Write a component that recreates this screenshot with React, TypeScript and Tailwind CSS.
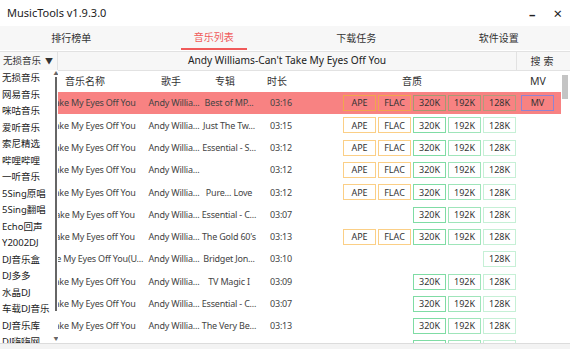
import React from "react";

type Row = {
  title: string;
  album: string;
  time: string;
  q: string[];
};

const sources = [
  "无损音乐", "网易音乐", "咪咕音乐", "爱听音乐", "索尼精选", "哔哩哔哩", "一听音乐",
  "5Sing原唱", "5Sing翻唱", "Echo回声", "Y2002DJ", "DJ音乐盒", "DJ多多", "水晶DJ",
  "车载DJ音乐", "DJ音乐库", "DJ嗨嗨网",
];

const all = ["APE", "FLAC", "320K", "192K", "128K"];
const mp3 = ["320K", "192K", "128K"];

const rows: Row[] = [
  { title: "Take My Eyes Off You", album: "Best of MP...", time: "03:16", q: all },
  { title: "Take My Eyes Off You", album: "Just The Tw...", time: "03:15", q: all },
  { title: "Take My Eyes Off You", album: "Essential - S...", time: "03:12", q: all },
  { title: "Take My Eyes Off You", album: "", time: "03:12", q: all },
  { title: "Take My Eyes Off You", album: "Pure... Love", time: "03:12", q: all },
  { title: "Take My Eyes off You", album: "Essential - C...", time: "03:07", q: mp3 },
  { title: "Take My Eyes off You", album: "The Gold 60's", time: "03:13", q: all },
  { title: "Take My Eyes Off You(U...", album: "Bridget Jon...", time: "03:10", q: ["128K"] },
  { title: "Take My Eyes Off You", album: "TV Magic I", time: "03:09", q: mp3 },
  { title: "Take My Eyes Off You", album: "Essential - C...", time: "03:07", q: mp3 },
  { title: "Take My Eyes Off You", album: "The Very Be...", time: "03:13", q: mp3 },
  { title: "Take My Eyes Off You", album: "Essential", time: "03:05", q: mp3 },
];

const border: Record<string, string> = {
  APE: "border-[#fbcf86]",
  FLAC: "border-[#fbcf86]",
  "320K": "border-[#7fdca4]",
  "192K": "border-[#9fe5ba]",
  "128K": "border-[#c6f0d6]",
};

const activeBorder: Record<string, string> = {
  APE: "border-[#f0a64e]",
  FLAC: "border-[#f0a64e]",
  "320K": "border-[#a39a70]",
  "192K": "border-[#a89a74]",
  "128K": "border-[#b39a7c]",
};

function QBtn({ label, on, active }: { label: string; on: boolean; active: boolean }) {
  if (!on) return <div className="w-[33px] h-[16px]" />;
  return (
    <div
      className={`w-[33px] h-[16px] border-[1.5px] flex items-center justify-center text-[9px] text-[#333] ${
        active ? activeBorder[label] : "bg-white " + border[label]
      }`}
    >
      {label}
    </div>
  );
}

export default function App() {
  return (
    <div
      className="w-[570px] h-[349px] relative overflow-hidden bg-white text-[#333] flex flex-col"
      style={{ fontFamily: '"Noto Sans", "Noto Sans CJK SC", sans-serif' }}
    >
      {/* title bar */}
      <div className="h-[26px] flex items-center justify-between pl-[7px] pr-[8px] bg-white">
        <span className="text-[11px] text-[#222]">MusicTools v1.9.3.0</span>
        <div className="flex items-center gap-[18px] text-[#222]">
          <span className="text-[13px] font-bold leading-none mt-[3px]">–</span>
          <span className="text-[15px] leading-none">×</span>
        </div>
      </div>

      {/* tabs */}
      <div className="h-[24px] grid grid-cols-4 bg-[#f7f7f7] text-[10px] text-[#333]">
        <div className="flex items-center justify-center">排行榜单</div>
        <div className="flex justify-center">
          <span className="px-[13px] h-full flex items-center border-b-2 border-[#f05a5a] text-[#f05a5a]">
            音乐列表
          </span>
        </div>
        <div className="flex items-center justify-center">下载任务</div>
        <div className="flex items-center justify-center">软件设置</div>
      </div>

      {/* search row */}
      <div className="h-[20px] mt-[1px] flex border-y border-[#e2e2e2] bg-[#f7f7f7]">
        <div className="w-[58px] flex items-center justify-between pl-[3px] pr-[4px] border-r border-[#e2e2e2] text-[9.5px]">
          <span>无损音乐</span>
          <span className="text-[8px]">▼</span>
        </div>
        <div className="flex-1 flex items-center justify-center text-[10.2px] text-[#222] border-r border-[#e2e2e2]">
          Andy Williams-Can't Take My Eyes Off You
        </div>
        <div className="w-[53px] flex items-center justify-center text-[10px] tracking-[3px]">搜索</div>
      </div>

      {/* table */}
      <div className="flex-1 relative overflow-hidden">
        <div className="h-[21px] flex items-center text-[10px] text-[#333]">
          <div className="w-[43px]" />
          <div className="w-[100px] pl-[22px]">音乐名称</div>
          <div className="w-[56px] text-center">歌手</div>
          <div className="w-[52px] text-center">专辑</div>
          <div className="w-[52px] text-center">时长</div>
          <div className="w-[218px] text-center">音质</div>
          <div className="w-[34px] text-center text-[10.5px]">MV</div>
        </div>
        {rows.map((r, i) => {
          const active = i === 0;
          return (
            <div
              key={i}
              className={`h-[22.3px] w-[561px] flex items-center text-[9px] tracking-[-0.2px] text-[#444] whitespace-nowrap ${
                active ? "bg-[#f88282]" : ""
              }`}
            >
              <div className="w-[43px]" />
              <div className="w-[100px] flex justify-center">
                <span>{r.title}</span>
              </div>
              <div className="w-[62px] text-center">Andy Willia...</div>
              <div className="w-[48px] flex justify-center">
                <span>{r.album}</span>
              </div>
              <div className="w-[56px] text-center">{r.time}</div>
              <div className="w-[34px]" />
              <div className="flex gap-[2px] tracking-normal">
                {all.map((q) => (
                  <QBtn key={q} label={q} on={r.q.includes(q)} active={active} />
                ))}
              </div>
              {active && (
                <div className="ml-[5px] w-[33px] h-[16px] border-[1.5px] border-[#8f84d2] flex items-center justify-center text-[9px] tracking-normal text-[#333]">
                  MV
                </div>
              )}
            </div>
          );
        })}

        {/* table scrollbar */}
        <div className="absolute right-[2px] top-[4px] w-[6px] h-[24px] bg-[#c4c4c4]" />
      </div>

      {/* status strip */}
      <div className="h-[6px] border-t border-[#dcdcdc] bg-[#f3f3f3]" />

      {/* source dropdown */}
      <div className="absolute left-0 top-[70px] w-[58px] h-[273px] bg-white overflow-hidden">
        <div className="flex flex-col">
          {sources.map((s) => (
            <div key={s} className="h-[16.5px] flex items-center pl-[2px] text-[9.5px] text-[#222] whitespace-nowrap">
              {s}
            </div>
          ))}
        </div>
        <div className="absolute right-0 top-0 w-[4px] h-full bg-white flex flex-col items-center">
          <span className="text-[5px] leading-none mt-[1px] text-[#666]">▲</span>
          <div className="w-[2px] h-[234px] mt-[1px] bg-[#666]" />
          <span className="text-[5px] leading-none mt-auto mb-[2px] text-[#666]">▼</span>
        </div>
      </div>
    </div>
  );
}
